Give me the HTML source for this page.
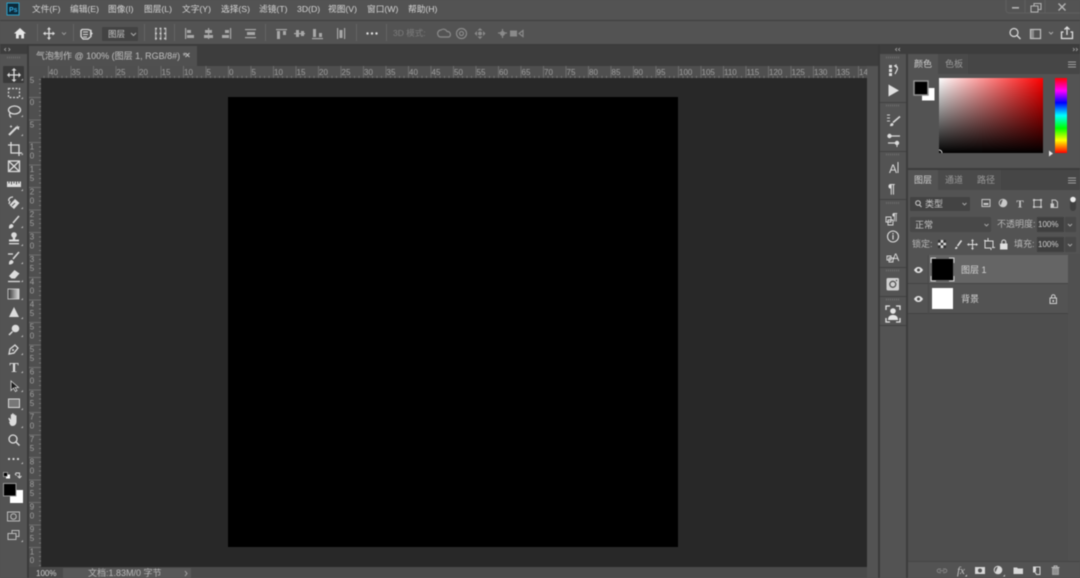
<!DOCTYPE html>
<html><head><meta charset="utf-8"><style>
html,body{margin:0;padding:0;background:#535353;width:1080px;height:578px;overflow:hidden}
svg{display:block;filter:blur(.5px)}
text{font-family:"Liberation Sans","Noto Sans CJK SC",sans-serif}
.m{font-size:8.7px;fill:#d6d6d6}
.r{font-size:8px;fill:#a0a0a0}
.t{font-size:8.5px;fill:#c8c8c8}
.i{fill:none;stroke:#dcdcdc;stroke-width:1.3}
.f{fill:#dcdcdc}
.d{fill:none;stroke:#8a8a8a;stroke-width:1.2}
.df{fill:#8a8a8a}
</style></head><body>
<svg width="1080" height="578" viewBox="0 0 1080 578" xmlns="http://www.w3.org/2000/svg">
<defs>
<pattern id="hm" x="48" y="66" width="22.5" height="12" patternUnits="userSpaceOnUse"><rect x="0" y="0" width="1" height="12" fill="#6e6e6e"/><rect x="4.5" y="10" width="1" height="2" fill="#777"/><rect x="9" y="10" width="1" height="2" fill="#777"/><rect x="13.5" y="10" width="1" height="2" fill="#777"/><rect x="18" y="10" width="1" height="2" fill="#777"/></pattern>
<pattern id="vm" x="29" y="97" width="12" height="22.5" patternUnits="userSpaceOnUse"><rect x="0" y="0" width="12" height="1" fill="#6e6e6e"/><rect x="10" y="4.5" width="2" height="1" fill="#777"/><rect x="10" y="9" width="2" height="1" fill="#777"/><rect x="10" y="13.5" width="2" height="1" fill="#777"/><rect x="10" y="18" width="2" height="1" fill="#777"/></pattern>
<linearGradient id="gh" x1="0" x2="1" y1="0" y2="0"><stop offset="0" stop-color="#fff"/><stop offset="1" stop-color="#f00"/></linearGradient>
<linearGradient id="gv" x1="0" x2="0" y1="0" y2="1"><stop offset="0" stop-color="#000" stop-opacity="0"/><stop offset="1" stop-color="#000"/></linearGradient>
<linearGradient id="hue" x1="0" x2="0" y1="0" y2="1"><stop offset="0" stop-color="#f00"/><stop offset=".17" stop-color="#f0f"/><stop offset=".33" stop-color="#00f"/><stop offset=".5" stop-color="#0ff"/><stop offset=".67" stop-color="#0f0"/><stop offset=".83" stop-color="#ff0"/><stop offset="1" stop-color="#f00"/></linearGradient>
<linearGradient id="gr" x1="0" x2="1" y1="0" y2="0"><stop offset="0" stop-color="#333"/><stop offset="1" stop-color="#ddd"/></linearGradient>
</defs>

<!-- base -->
<rect width="1080" height="578" fill="#535353"/>
<rect x="0" y="20" width="1080" height="1" fill="#3e3e3e"/>
<rect x="0" y="44" width="1080" height="1" fill="#3a3a3a"/>
<rect x="0" y="45" width="878" height="21" fill="#3d3d3d"/>
<rect x="0" y="45" width="1080" height="9" fill="#3d3d3d"/>

<!-- menu bar -->
<rect x="7" y="3" width="12" height="12" fill="#0d2a3a" stroke="#2aa0c8" stroke-width="1"/>
<text x="9" y="12" style="font-size:7px;font-weight:bold" fill="#31a8dc">Ps</text>
<text x="32" y="12" class="m">文件(F)</text>
<text x="70" y="12" class="m">编辑(E)</text>
<text x="108" y="12" class="m">图像(I)</text>
<text x="144" y="12" class="m">图层(L)</text>
<text x="182" y="12" class="m">文字(Y)</text>
<text x="221" y="12" class="m">选择(S)</text>
<text x="259" y="12" class="m">滤镜(T)</text>
<text x="297" y="12" class="m">3D(D)</text>
<text x="328" y="12" class="m">视图(V)</text>
<text x="367" y="12" class="m">窗口(W)</text>
<text x="408" y="12" class="m">帮助(H)</text>
<!-- window controls -->
<path d="M1006 0v10a3 3 0 0 0 3 3h71" fill="none" stroke="#606060"/>
<path d="M1025 0v13M1045 0v13" stroke="#606060"/>
<rect x="1012" y="7" width="7" height="1.6" fill="#b4b4b4"/>
<path d="M1031 6h7v6h-7zM1034 6v-2.500h7v6h-3" fill="none" stroke="#b4b4b4" stroke-width="1.100"/>
<path d="M1058.500 3.500l7 7M1065.500 3.500l-7 7" stroke="#b4b4b4" stroke-width="1.400"/>

<!-- options bar -->
<path d="M14 33.500l6-5.500 6 5.500h-2v5h-2.800v-3.500h-2.400v3.500h-2.800v-5z" fill="#e6e6e6"/>
<g fill="#656565"><rect x="37" y="24" width="1" height="17"/><rect x="73" y="24" width="1" height="17"/><rect x="144" y="24" width="1" height="17"/><rect x="174" y="24" width="1" height="17"/><rect x="265" y="24" width="1" height="17"/><rect x="356" y="24" width="1" height="17"/><rect x="386" y="24" width="1" height="17"/></g>
<!-- move -->
<path d="M49 28v11M43.500 33.500h11" class="i"/><path d="M49 27l-2 2.500h4zM49 40l-2-2.500h4zM43 33.500l2.500-2v4zM55 33.500l-2.500-2v4z" class="f"/>
<path d="M62 32.500l2 2 2-2" fill="none" stroke="#999"/>
<!-- auto select -->
<path d="M82 29.500h6l3 1v6l-3 2.500h-5l-2-2.500v-6z" class="i"/><path d="M83 32h5M83 34.500h5M83 37h4" stroke="#d8d8d8"/><path d="M90 31l3 2.500-3 2.500z" class="f"/>
<rect x="102" y="27" width="36" height="14" rx="1" fill="#434343"/>
<text x="108" y="37" class="t">图层</text>
<path d="M131 33l2.500 2.500 2.500-2.500" fill="none" stroke="#aaa"/>
<!-- transform -->
<path d="M155 28.500h11M155 33.500h11M155 38.500h11" stroke="#d0d0d0" stroke-width="1.400" stroke-dasharray="2 2.500"/>
<path d="M155 28h1.500v12H155zM160 28h1.500v12H160zM165 28h1.500v12H165z" fill="#d0d0d0" opacity=".6"/>
<!-- align -->
<g fill="#a8a8a8">
<rect x="185" y="28" width="1.200" height="11"/><rect x="187" y="30" width="4" height="3"/><rect x="187" y="35" width="7" height="3"/>
<rect x="208" y="28" width="1.200" height="11"/><rect x="205" y="30" width="7" height="3"/><rect x="204" y="35" width="9" height="3"/>
<rect x="230" y="28" width="1.200" height="11"/><rect x="225" y="30" width="4" height="3"/><rect x="222" y="35" width="7" height="3"/>
<rect x="245" y="29" width="11" height="1.200"/><rect x="245" y="37" width="11" height="1.200"/><rect x="247" y="32" width="8" height="3"/>
<rect x="276" y="29" width="11" height="1.200"/><rect x="277" y="31" width="3" height="8"/><rect x="283" y="31" width="3" height="4"/>
<rect x="294" y="33" width="11" height="1.200"/><rect x="296" y="30" width="3" height="7"/><rect x="301" y="31" width="3" height="5"/>
<rect x="312" y="38" width="11" height="1.200"/><rect x="313" y="29" width="3" height="8"/><rect x="319" y="33" width="3" height="4"/>
<rect x="337" y="28" width="1.200" height="11"/><rect x="344" y="28" width="1.200" height="11"/><rect x="339.500" y="30" width="3" height="8"/>
</g>
<g fill="#e0e0e0"><circle cx="367.500" cy="33.500" r="1.200"/><circle cx="372" cy="33.500" r="1.200"/><circle cx="376.500" cy="33.500" r="1.200"/></g>
<text x="393" y="36" style="font-size:8.500px" fill="#7c7c7c">3D 模式:</text>
<!-- 3D icons -->
<path d="M438 35a3.500 3.500 0 0 1 3-5 4 4 0 0 1 6 1.500 3 3 0 0 1 2 5.500h-8a3 3 0 0 1-3-2z" class="d"/>
<circle cx="461.500" cy="33.500" r="5" class="d"/><circle cx="461.500" cy="33.500" r="2" class="d"/>
<path d="M480 28l-2.500 2.500h5zM480 39l-2.500-2.500h5zM474.500 33.500l2.500-2.500v5zM485.500 33.500l-2.500-2.500v5z" class="df"/><circle cx="480" cy="33.500" r="2" class="df"/>
<path d="M498 33h9M502.500 29v9" class="d"/><circle cx="502.500" cy="33.500" r="2.500" class="df"/>
<rect x="510" y="30.500" width="7" height="6" class="df"/><path d="M519 33.500l4-3v6z" class="d"/>
<!-- right options -->
<circle cx="1014" cy="32.500" r="4" fill="none" stroke="#d8d8d8" stroke-width="1.200"/><path d="M1017 35.500l3.500 3.500" stroke="#d8d8d8" stroke-width="1.300"/>
<rect x="1030.500" y="29.500" width="10" height="9" fill="none" stroke="#c0c0c0" stroke-width="1.200"/><rect x="1031" y="30" width="3" height="8" fill="#8a8a8a"/>
<path d="M1049 32l2 2 2-2" fill="none" stroke="#aaa"/>
<path d="M1063.500 32h-2v6.500h11V32h-2" fill="none" stroke="#e0e0e0" stroke-width="1.300"/><path d="M1067 35V27M1064.500 29.500l2.500-2.500 2.500 2.500" fill="none" stroke="#e0e0e0" stroke-width="1.300"/>

<!-- tab -->
<rect x="29" y="46" width="168" height="20" fill="#505050"/>
<text x="36" y="59" style="font-size:9px" fill="#c0c0c0">气泡制作 @ 100% (图层 1, RGB/8#) *</text>
<path d="M185.500 53l4 4M189.500 53l-4 4" stroke="#c0c0c0"/>

<!-- left panel -->
<path d="M6 48l-1.500 1.500L6 51M8.500 48L10 49.500 8.500 51" fill="none" stroke="#aaa" stroke-width=".8"/>
<rect x="0" y="54" width="27" height="524" fill="#535353"/>
<rect x="27" y="45" width="2" height="533" fill="#3a3a3a"/>
<path d="M7 57.500h14" stroke="#6b6b6b" stroke-width="2" stroke-dasharray="1 1"/>

<!-- rulers -->
<rect x="29" y="66" width="838" height="12" fill="#4f4f4f"/>
<rect x="29" y="66" width="12" height="501" fill="#4f4f4f"/>
<rect x="41" y="66" width="826" height="12" fill="url(#hm)"/>
<rect x="29" y="78" width="12" height="489" fill="url(#vm)"/>
<text x="49" y="75" class="r">40</text><text x="71.500" y="75" class="r">35</text><text x="94" y="75" class="r">30</text><text x="116.500" y="75" class="r">25</text><text x="139" y="75" class="r">20</text><text x="161.500" y="75" class="r">15</text><text x="184" y="75" class="r">10</text><text x="206.500" y="75" class="r">5</text><text x="229" y="75" class="r">0</text><text x="251.500" y="75" class="r">5</text><text x="274" y="75" class="r">10</text><text x="296.500" y="75" class="r">15</text><text x="319" y="75" class="r">20</text><text x="341.500" y="75" class="r">25</text><text x="364" y="75" class="r">30</text><text x="386.500" y="75" class="r">35</text><text x="409" y="75" class="r">40</text><text x="431.500" y="75" class="r">45</text><text x="454" y="75" class="r">50</text><text x="476.500" y="75" class="r">55</text><text x="499" y="75" class="r">60</text><text x="521.500" y="75" class="r">65</text><text x="544" y="75" class="r">70</text><text x="566.500" y="75" class="r">75</text><text x="589" y="75" class="r">80</text><text x="611.500" y="75" class="r">85</text><text x="634" y="75" class="r">90</text><text x="656.500" y="75" class="r">95</text><text x="679" y="75" class="r">100</text><text x="701.500" y="75" class="r">105</text><text x="724" y="75" class="r">110</text><text x="746.500" y="75" class="r">115</text><text x="769" y="75" class="r">120</text><text x="791.500" y="75" class="r">125</text><text x="814" y="75" class="r">130</text><text x="836.500" y="75" class="r">135</text><text x="859" y="75" class="r">14</text>
<g text-anchor="middle">
<text x="32" y="83" class="r">5</text><text x="32" y="105" class="r">0</text><text x="32" y="127.500" class="r">5</text>
<text x="32" y="149.500" class="r">1</text><text x="32" y="158.500" class="r">0</text>
<text x="32" y="172" class="r">1</text><text x="32" y="181" class="r">5</text>
<text x="32" y="194.500" class="r">2</text><text x="32" y="203.500" class="r">0</text>
<text x="32" y="217" class="r">2</text><text x="32" y="226" class="r">5</text>
<text x="32" y="239.500" class="r">3</text><text x="32" y="248.500" class="r">0</text>
<text x="32" y="262" class="r">3</text><text x="32" y="271" class="r">5</text>
<text x="32" y="284.500" class="r">4</text><text x="32" y="293.500" class="r">0</text>
<text x="32" y="307" class="r">4</text><text x="32" y="316" class="r">5</text>
<text x="32" y="329.500" class="r">5</text><text x="32" y="338.500" class="r">0</text>
<text x="32" y="352" class="r">5</text><text x="32" y="361" class="r">5</text>
<text x="32" y="374.500" class="r">6</text><text x="32" y="383.500" class="r">0</text>
<text x="32" y="397" class="r">6</text><text x="32" y="406" class="r">5</text>
<text x="32" y="419.500" class="r">7</text><text x="32" y="428.500" class="r">0</text>
<text x="32" y="442" class="r">7</text><text x="32" y="451" class="r">5</text>
<text x="32" y="464.500" class="r">8</text><text x="32" y="473.500" class="r">0</text>
<text x="32" y="487" class="r">8</text><text x="32" y="496" class="r">5</text>
<text x="32" y="509.500" class="r">9</text><text x="32" y="518.500" class="r">0</text>
<text x="32" y="532" class="r">9</text><text x="32" y="541" class="r">5</text>
<text x="32" y="554.500" class="r">1</text><text x="32" y="563" class="r">0</text>
</g>

<!-- canvas -->
<rect x="41" y="78" width="826" height="489" fill="#282828"/>
<rect x="228" y="97" width="450" height="450" fill="#000"/>
<rect x="867" y="66" width="11" height="512" fill="#535353"/>
<rect x="878" y="45" width="2" height="533" fill="#3a3a3a"/>

<!-- status -->
<rect x="29" y="567" width="838" height="11" fill="#4a4a4a"/>
<rect x="63" y="568" width="128" height="10" fill="#585858"/>
<text x="36" y="576" style="font-size:8px" fill="#d0d0d0">100%</text>
<text x="88" y="576" style="font-size:9px" fill="#b8b8b8">文档:1.83M/0 字节</text>
<path d="M185 571l2 2.500-2 2.500" fill="none" stroke="#aaa" stroke-width=".9"/>

<!-- tools -->
<rect x="3" y="66" width="21" height="17" rx="1" fill="#3a3a3a"/>
<g>
<path d="M14 69v12M8 75h12" class="i"/><path d="M14 68l-2.500 2.500h5zM14 82l-2.500-2.500h5zM7 75l2.500-2.500v5zM21 75l-2.500-2.500v5z" class="f"/>
<rect x="8.500" y="88.500" width="11" height="9" fill="none" stroke="#d8d8d8" stroke-width="1.200" stroke-dasharray="2 1.500"/>
<ellipse cx="14.500" cy="110" rx="6" ry="4" class="i"/><path d="M10 113c-1 2 0 3.500 1 4.500" class="i"/>
<path d="M9 135l8-8" stroke="#d8d8d8" stroke-width="2"/><path d="M17 125l1 1.500 1.800.2-1 1.300.4 1.800-1.800-.6z" class="f"/><path d="M11 125l.5 1 1 .5-1 .5-.5 1-.5-1-1-.5 1-.5z" class="f"/>
<path d="M11 142v11h11M8 145h11v11" class="i"/>
<rect x="8.500" y="161" width="11" height="10.500" class="i"/><path d="M8.500 161l11 10.500M19.500 161l-11 10.500" class="i"/>
<rect x="7" y="181.500" width="14" height="5.500" class="f"/><path d="M9 183.500v-2M11.500 184.500v-3M14 183.500v-2M16.500 184.500v-3M19 183.500v-2" stroke="#535353"/>
<path d="M9.500 205l5.500-6 4.500 4-5.500 6z" class="f"/><path d="M10 201l-1 3M13 197a4 3 0 0 0-4 4" class="i"/><path d="M12 206l3-3" stroke="#535353"/>
<path d="M9 227c0-2 1.500-3 3-3l1.500 1.500c0 2-2 3-4.500 3z" class="f"/><path d="M13 223l6-7" stroke="#d8d8d8" stroke-width="1.600"/>
<circle cx="14" cy="235" r="2.800" class="f"/><path d="M12.800 237h2.400v2.500H19v2H9v-2h3.800z" class="f"/><rect x="9" y="243" width="10" height="1.300" class="f"/>
<path d="M9 263c0-2 1.500-3 3-3l1.500 1.500c0 2-2 3-4.500 3z" class="f"/><path d="M13 259l6-7" stroke="#d8d8d8" stroke-width="1.600"/><path d="M8 254h5" class="i"/>
<path d="M9 276l5.500-6 5 3.500-4.500 5h-3.500z" class="f"/><path d="M8 281.500h12" class="i"/>
<rect x="8" y="289" width="11" height="10" fill="url(#gr)" stroke="#d8d8d8" stroke-width=".8"/>
<path d="M14 307l5 10H9z" class="f"/>
<circle cx="15.500" cy="328.500" r="3.800" class="f"/><path d="M12.500 331.500l-3.500 3.500" stroke="#d8d8d8" stroke-width="1.500"/>
<path d="M9 354l1-5 5-4 3 3-4 5z" class="i"/><circle cx="13" cy="350" r="1" class="f"/>
<text x="14" y="372" text-anchor="middle" style="font-family:'Liberation Serif',serif;font-size:14px;font-weight:bold" fill="#dcdcdc">T</text>
<path d="M11 381v9.500l2.500-2.500 2 3.500 1.500-1-2-3h3.500z" fill="#1c1c1c" stroke="#d8d8d8" stroke-width=".8"/>
<rect x="8.500" y="399" width="11" height="8.500" fill="#777" stroke="#d8d8d8" stroke-width="1"/>
<path d="M10 422l-1.500-3c-.5-1 .7-1.500 1.300-.7l1 1.500v-4.800c0-1 1.300-1 1.300 0v-1c0-1 1.500-1 1.500 0v1c0-1 1.500-1 1.500 0v1c0-1 1.400-1 1.400 0v5.500c0 3-2 4.500-4 4.500s-2.500-1.500-3.500-4z" class="f"/>
<circle cx="13" cy="439" r="4" class="i"/><path d="M16 442l3.500 3.500" stroke="#d8d8d8" stroke-width="1.500"/>
</g>
<!-- tool corner triangles -->
<g fill="#c0c0c0"><path d="M23 78.500v2h-2zM23 97v2h-2zM23 115v2h-2zM23 134v2h-2zM23 153v2h-2zM23 189v2h-2zM23 207v2h-2zM23 226v2h-2zM23 244v2h-2zM23 262v2h-2zM23 280v2h-2zM23 298v2h-2zM23 317v2h-2zM23 335v2h-2zM23 353v2h-2zM23 371v2h-2zM23 390v2h-2zM23 408v2h-2zM23 426v2h-2zM23 462v2h-2zM23 540v2h-2z"/></g>
<g fill="#dcdcdc"><circle cx="9" cy="459" r="1.100"/><circle cx="13.500" cy="459" r="1.100"/><circle cx="18" cy="459" r="1.100"/></g>
<rect x="6" y="474.500" width="4" height="4" fill="#fff"/><rect x="3.500" y="472.500" width="4" height="4" fill="#000" stroke="#ccc" stroke-width=".6"/>
<path d="M16 473h3.500v4M15 474.500l1.500-2M15 474l1.500 1.500M17.500 476l2 2 2-2" fill="none" stroke="#ddd" stroke-width=".9"/>
<rect x="10" y="490" width="13" height="13" fill="#fff"/>
<rect x="3.500" y="483.500" width="12.500" height="12.500" fill="#000" stroke="#9a9a9a"/>
<rect x="7.500" y="512" width="12" height="9" fill="none" stroke="#bbb"/><circle cx="13.500" cy="516.500" r="2.800" fill="none" stroke="#bbb"/>
<rect x="12" y="530.500" width="7" height="6" fill="#535353" stroke="#bbb"/><rect x="8" y="533.500" width="8" height="6" fill="#535353" stroke="#bbb"/>

<!-- dock -->
<rect x="880" y="54" width="26" height="524" fill="#535353"/>
<rect x="906" y="54" width="2" height="524" fill="#3c3c3c"/>
<g fill="#414141"><rect x="880" y="102" width="26" height="1"/><rect x="880" y="151" width="26" height="1"/><rect x="880" y="199" width="26" height="1"/><rect x="880" y="267" width="26" height="1"/><rect x="880" y="296" width="26" height="1"/><rect x="880" y="325" width="26" height="1"/></g>
<path d="M886 57.500h14M886 105.500h14M886 154.500h14M886 203h14M886 270.500h14M886 299.500h14" stroke="#6b6b6b" stroke-width="2" stroke-dasharray="1 1"/>
<path d="M897 48l-1.500 1.500 1.500 1.500M900 48l-1.500 1.500L900 51M1073 48l1.500 1.500L1073 51M1076 48l1.500 1.500L1076 51" fill="none" stroke="#aaa" stroke-width=".8"/>
<path d="M889 65h3v3h-3zM889 69h3v3h-3zM889 73h3v3h-3z" class="f"/><path d="M894 66c3-1 4 2 3 4l-2 4M895 66l1.500-1.500M895 66l1.500 1.500" fill="none" stroke="#d8d8d8" stroke-width="1.200"/>
<path d="M888.500 84.500l10.500 6-10.500 6z" fill="#e0e0e0"/>
<path d="M887 115h3M887 118h3M887 121h3" stroke="#d0d0d0"/><path d="M890 126c0-2 1-3 2.500-3l1 1c0 2-1.500 2.500-3.500 2z" class="f"/><path d="M893 122.500l7-6" stroke="#d8d8d8" stroke-width="1.600"/>
<path d="M891 136h9M888 143h7" stroke="#d8d8d8" stroke-width="1.300"/><circle cx="889.500" cy="136" r="2.200" class="f"/><circle cx="897" cy="143" r="2.200" class="f"/><path d="M897 145v2" stroke="#d8d8d8"/>
<text x="889" y="173" style="font-size:12px" fill="#dcdcdc">A</text><path d="M898 162v11" stroke="#dcdcdc"/>
<text x="888" y="193" style="font-size:13px;font-weight:bold" fill="#dcdcdc">¶</text>
<text x="892" y="220" style="font-size:10px;font-weight:bold" fill="#dcdcdc">¶</text><path d="M886 217h5v5h-5zM888 220h5v5h-5z" fill="#535353" stroke="#dcdcdc" stroke-width=".9"/>
<circle cx="893" cy="236.500" r="5.500" fill="none" stroke="#dcdcdc" stroke-width="1.100"/><path d="M893 235v4.500M893 233v1.200" stroke="#dcdcdc" stroke-width="1.200"/>
<text x="892" y="261" style="font-size:11px" fill="#dcdcdc">A</text><path d="M887 256h4v4h-4zM889 258h4v4h-4z" fill="#535353" stroke="#dcdcdc" stroke-width=".9"/>
<rect x="886.500" y="278" width="12.500" height="12.500" rx="1.500" fill="#cfcfcf"/><circle cx="892.800" cy="284.300" r="3" fill="none" stroke="#535353" stroke-width="1.300"/><circle cx="896.500" cy="280.500" r=".8" fill="#535353"/>
<path d="M886 310v-4h4M896 306h4v4M900 318v4h-4M890 322h-4v-4" fill="none" stroke="#e4e4e4" stroke-width="1.300"/><circle cx="893" cy="311" r="2.800" fill="#e4e4e4"/><path d="M888 320c0-4 2.500-5 5-5s5 1 5 5z" fill="#e4e4e4"/>

<!-- right panels -->
<rect x="908" y="54" width="172" height="524" fill="#535353"/>
<rect x="908" y="54" width="172" height="20" fill="#464646"/>
<rect x="908" y="54" width="30" height="20" fill="#535353"/>
<rect x="938" y="54" width="30" height="20" fill="#4a4a4a"/>
<text x="914" y="67" style="font-size:9px" fill="#d0d0d0">颜色</text>
<text x="945" y="67" style="font-size:9px" fill="#9a9a9a">色板</text>
<path d="M1068 62h8M1068 64.500h8M1068 67h8" stroke="#a0a0a0" stroke-width="1.100"/>
<!-- color -->
<rect x="922" y="88" width="12.500" height="12.500" fill="#fff"/>
<rect x="914" y="81" width="14" height="14" fill="#000" stroke="#929292" stroke-width="1.500"/>
<rect x="939" y="78" width="104" height="75" fill="url(#gh)"/>
<rect x="939" y="78" width="104" height="75" fill="url(#gv)"/>
<path d="M939 150a3 3 0 0 1 3 3" fill="none" stroke="#ddd"/>
<rect x="1055" y="78" width="12" height="75" fill="url(#hue)"/>
<path d="M1049 150.500l4 3-4 3z" fill="#e8e8e8"/>
<rect x="908" y="168" width="172" height="2" fill="#3c3c3c"/>

<!-- layers header -->
<rect x="908" y="170" width="172" height="20" fill="#464646"/>
<rect x="908" y="170" width="30" height="20" fill="#535353"/>
<rect x="938" y="170" width="31" height="20" fill="#4a4a4a"/>
<rect x="969" y="170" width="32" height="20" fill="#4a4a4a"/>
<text x="914" y="183" style="font-size:9px" fill="#d0d0d0">图层</text>
<text x="945" y="183" style="font-size:9px" fill="#9a9a9a">通道</text>
<text x="977" y="183" style="font-size:9px" fill="#9a9a9a">路径</text>
<path d="M1068 178h8M1068 180.500h8M1068 183h8" stroke="#a0a0a0" stroke-width="1.100"/>

<!-- filter -->
<rect x="910" y="197" width="60" height="14" rx="1" fill="#434343"/>
<circle cx="918" cy="203" r="2.300" fill="none" stroke="#ccc"/><path d="M919.500 205l2 2" stroke="#ccc"/>
<text x="925" y="207" style="font-size:9px" fill="#c8c8c8">类型</text>
<path d="M962.500 203l2 2 2-2" fill="none" stroke="#aaa" stroke-width=".9"/>
<rect x="982" y="199.500" width="8" height="7" fill="none" stroke="#c8c8c8"/><rect x="983.500" y="203" width="5" height="2" fill="#c8c8c8"/>
<circle cx="1003" cy="203" r="3.800" fill="none" stroke="#c8c8c8"/><path d="M1003 199.200a3.800 3.800 0 0 1 0 7.600l-2.700-1.100z" fill="#c8c8c8"/>
<text x="1020" y="207.500" text-anchor="middle" style="font-family:'Liberation Serif',serif;font-size:11px;font-weight:bold" fill="#c8c8c8">T</text>
<rect x="1034" y="200" width="7" height="7" fill="none" stroke="#c8c8c8"/><path d="M1033 199h2v2h-2zM1040 199h2v2h-2zM1033 206h2v2h-2zM1040 206h2v2h-2z" fill="#c8c8c8"/>
<path d="M1052 200h3.500l2 2v5.500h-5z" fill="none" stroke="#c8c8c8"/><rect x="1050.500" y="203.500" width="3.500" height="4.500" fill="#c8c8c8"/>
<rect x="1070" y="197" width="6" height="14" rx="3" fill="#3f3f3f"/><circle cx="1073" cy="199.500" r="2.800" fill="#ececec"/>
<!-- blend -->
<rect x="910" y="217" width="81" height="15" rx="1" fill="#484848"/>
<text x="915" y="228" style="font-size:9px" fill="#c8c8c8">正常</text>
<path d="M984.500 224l2 2 2-2" fill="none" stroke="#aaa" stroke-width=".9"/>
<text x="997" y="227" style="font-size:9px" fill="#b8b8b8">不透明度:</text>
<rect x="1037" y="217" width="27" height="15" fill="#3f3f3f"/>
<rect x="1065" y="217" width="11" height="15" fill="#484848"/>
<text x="1038" y="227" style="font-size:8px" fill="#d0d0d0">100%</text>
<path d="M1068 224l2 2 2-2" fill="none" stroke="#aaa" stroke-width=".9"/>
<!-- lock -->
<text x="912" y="247" style="font-size:9px" fill="#b8b8b8">锁定:</text>
<rect x="938" y="240" width="8" height="8" fill="#ddd"/><path d="M938 240h2.700v2.700H938zM943.300 240H946v2.700h-2.700zM940.700 242.700h2.600v2.600h-2.600zM938 245.300h2.700V248H938zM943.300 245.300H946V248h-2.700z" fill="#333"/>
<path d="M955 249c0-1.500.7-2.300 1.800-2.300l.7.7c0 1.500-1 1.800-2.500 1.600z" fill="#ddd"/><path d="M957.500 246l4-5.500" stroke="#ddd" stroke-width="1.500"/>
<path d="M972.500 240v9M968 244.500h9" stroke="#ddd"/><path d="M972.500 239l-1.500 2h3zM972.500 250l-1.500-2h3zM967 244.500l2-1.500v3zM978 244.500l-2-1.500v3z" fill="#ddd"/>
<path d="M985 241h8v7M985 241v7h6" fill="none" stroke="#ddd"/><path d="M984 240.500h2M992 247.500h3M988 238v3M991 250v-2" stroke="#ddd"/>
<rect x="1000" y="243.500" width="7.500" height="6" fill="#e0e0e0"/><path d="M1001.800 243.500v-1.500a2 2 0 0 1 4 0v1.500" fill="none" stroke="#e0e0e0"/>
<text x="1014" y="247" style="font-size:9px" fill="#b8b8b8">填充:</text>
<rect x="1037" y="237" width="27" height="15" fill="#3f3f3f"/>
<rect x="1065" y="237" width="11" height="15" fill="#484848"/>
<text x="1038" y="247" style="font-size:8px" fill="#d0d0d0">100%</text>
<path d="M1068 244l2 2 2-2" fill="none" stroke="#aaa" stroke-width=".9"/>

<!-- layer list -->
<rect x="908" y="254" width="172" height="308" fill="#4e4e4e"/>
<rect x="908" y="254" width="160" height="60" fill="#535353"/>
<rect x="1068" y="254" width="12" height="308" fill="#505050"/>
<rect x="908" y="255" width="160" height="28" fill="#656565"/>
<rect x="908" y="255" width="20" height="28" fill="#535353"/>
<rect x="908" y="283" width="160" height="1" fill="#434343"/>
<rect x="908" y="313" width="160" height="1" fill="#434343"/>
<rect x="928" y="255" width="1" height="59" fill="#484848"/>
<path d="M914 270c1.500-2.500 3-3 4.500-3s3 .5 4.500 3c-1.500 2.500-3 3-4.500 3s-3-.5-4.500-3z" fill="#e0e0e0"/><circle cx="918.500" cy="270" r="1.500" fill="#4a4a4a"/>
<path d="M914 299c1.500-2.500 3-3 4.500-3s3 .5 4.500 3c-1.500 2.500-3 3-4.500 3s-3-.5-4.500-3z" fill="#e0e0e0"/><circle cx="918.500" cy="299" r="1.500" fill="#4a4a4a"/>
<rect x="932" y="259" width="21" height="21" fill="#000"/>
<path d="M931 263v-5h5M949 258h5v5M954 276v5h-5M936 281h-5v-5" fill="none" stroke="#cfcfcf" stroke-width="1"/>
<rect x="932" y="288" width="21" height="21" fill="#fff"/>
<text x="961" y="273" style="font-size:9px" fill="#d4d4d4">图层 1</text>
<text x="961" y="302" style="font-size:9px" fill="#d4d4d4">背景</text>
<rect x="1050" y="298" width="6.500" height="5.500" fill="none" stroke="#d0d0d0"/><path d="M1051.500 298v-1.500a1.800 1.800 0 0 1 3.600 0v1.500" fill="none" stroke="#d0d0d0"/><rect x="1052.500" y="300" width="1.500" height="2" fill="#d0d0d0"/>

<!-- footer -->
<rect x="908" y="562" width="172" height="16" fill="#535353"/>
<rect x="908" y="561" width="172" height="1" fill="#454545"/>
<path d="M941 569h-2a1.800 1.800 0 0 0 0 3.600h2M943 569h2a1.800 1.800 0 0 1 0 3.600h-2M939.500 570.800h5" fill="none" stroke="#858585"/>
<text x="957" y="574" style="font-family:'Liberation Serif',serif;font-size:11px;font-style:italic" fill="#c4c4c4">fx</text>
<path d="M967 574.500v2h-2z" fill="#ccc"/>
<rect x="975" y="567" width="10" height="7" fill="#d8d8d8"/><circle cx="980" cy="570.500" r="2" fill="#535353"/>
<circle cx="998" cy="570" r="3.800" fill="none" stroke="#d8d8d8"/><path d="M998 566.200a3.800 3.800 0 0 1 0 7.600l-2.700-1.100z" fill="#d8d8d8"/><path d="M1005 574.500v2h-2z" fill="#ccc"/>
<path d="M1013.500 567.500h3.500l1 1h5v5.500h-9.500z" fill="#d8d8d8"/>
<path d="M1033.500 567h6.500v7.500h-3.500l-1.500-2.500h-1.500z" fill="none" stroke="#d8d8d8"/><rect x="1033" y="567" width="3" height="4.500" fill="#d8d8d8"/>
<rect x="1052.500" y="568.500" width="6" height="6" fill="#8f8f8f" stroke="#bbb" stroke-width=".6"/><path d="M1051.500 567.500h8M1054 567v-1h3v1" stroke="#bbb" stroke-width=".9" fill="none"/>
</svg>
</body></html>
